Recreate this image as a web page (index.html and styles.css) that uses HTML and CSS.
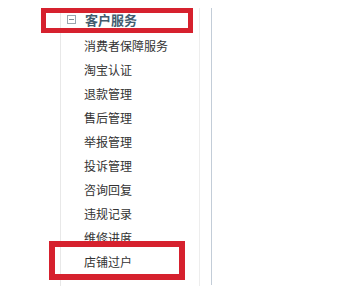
FILE: index.html
```html
<!DOCTYPE html>
<html lang="zh-CN">
<head>
  <meta charset="UTF-8">
  <title>客户服务</title>
  <link rel="stylesheet" href="styles.css">
</head>
<body>

  <div class="page">
    <!-- left menu -->
    <div class="sidebar">
      <div class="menu-title">
        <span class="fold-icon">
          <svg width="9" height="9" viewBox="0 0 9 9">
            <rect x="0.5" y="0.5" width="8" height="8" fill="none" stroke="#9aa6b0"/>
            <line x1="2" y1="4.5" x2="7" y2="4.5" stroke="#7f8c96"/>
          </svg>
        </span>
        客户服务
      </div>
      <ul class="menu-list">
        <li>消费者保障服务</li>
        <li>淘宝认证</li>
        <li>退款管理</li>
        <li>售后管理</li>
        <li>举报管理</li>
        <li>投诉管理</li>
        <li>咨询回复</li>
        <li>违规记录</li>
        <li>维修进度</li>
        <li>店铺过户</li>
      </ul>
    </div>

    <div class="main"></div>

    <!-- annotation marks -->
    <div class="mark mark-title"></div>
    <div class="mark mark-item"></div>
  </div>

</body>
</html>
```

FILE: styles.css
```css
body {
  margin: 0;
  background-color: #fff;
  font-family: "Noto Sans CJK SC", "Noto Sans", sans-serif;
}

.page {
  position: relative;
  display: flex;
  padding: 8px 0 0 60px;
  height: 292px;
  box-sizing: border-box;
}

.sidebar {
  width: 138px;
  height: 278px;
  border-left: 1px solid #e8e8e8;
  border-right: 1px solid #ededed;
}

.menu-title {
  display: flex;
  align-items: center;
  height: 22px;
  padding: 0 0 4px 6px;
  font-size: 13px;
  font-weight: bold;
  color: #435d70;
}

.fold-icon {
  display: flex;
  margin-right: 9px;
}

.menu-list {
  list-style: none;
  margin: 0;
  padding: 0 0 0 23px;
}

.menu-list li {
  height: 24px;
  line-height: 24px;
  font-size: 12px;
  color: #333;
}

.main {
  margin-left: 11px;
  height: 277px;
  border-left: 1px solid #c3cdd8;
}

.mark {
  position: absolute;
  border: 5px solid #d6212e;
  box-sizing: border-box;
}

.mark-title {
  left: 41px;
  top: 8px;
  width: 152px;
  height: 25px;
}

.mark-item {
  left: 49px;
  top: 241px;
  width: 136px;
  height: 39px;
  border-width: 6px;
}
```
